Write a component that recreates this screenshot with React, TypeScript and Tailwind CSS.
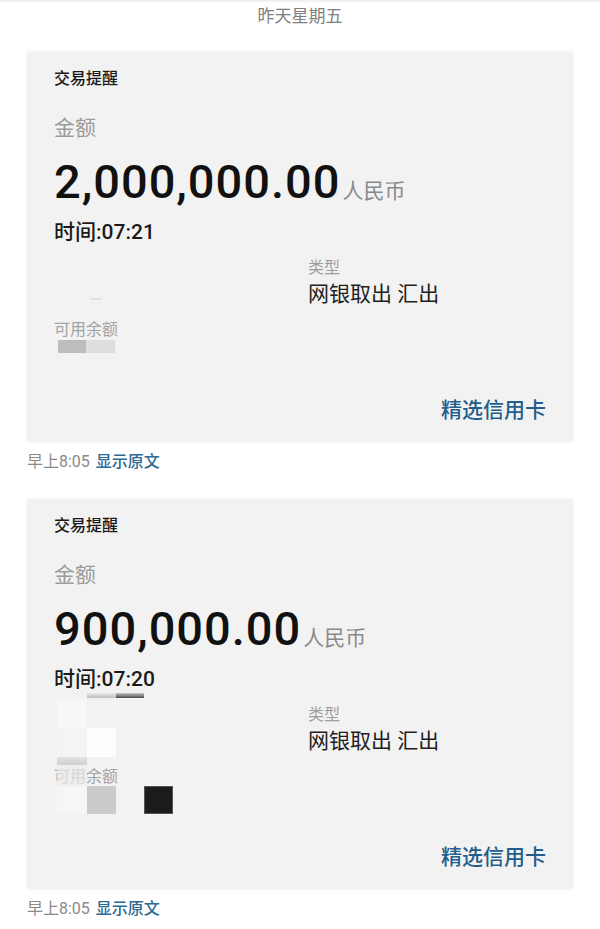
import React from 'react';

const font = "font-['Roboto','Noto_Sans_CJK_SC',sans-serif]";

type Txn = {
  amount: string;
  time: string;
  censor: 'light' | 'heavy';
};

const txns: Txn[] = [
  { amount: '2,000,000.00', time: '07:21', censor: 'light' },
  { amount: '900,000.00', time: '07:20', censor: 'heavy' },
];

// redaction mosaic that sits on top of the second card
function Mosaic() {
  return (
    <div className="pointer-events-none absolute left-[30px] top-[194px] grid grid-cols-[30px_29px_28px_29px] grid-rows-[5px_1px_29px_29px_8px_21px_28px]">
      <div className="col-start-2 row-start-1 bg-gradient-to-b from-[#e8e8e8] to-[#bdbdbd]" />
      <div className="col-start-3 row-start-1 bg-gradient-to-b from-[#c8c8c8] to-[#4a4a4a]" />
      <div className="col-start-1 row-start-3 bg-[#f7f7f7]" />
      <div className="col-start-1 row-start-4 bg-[#f4f4f4]" />
      <div className="col-start-2 row-start-4 bg-[#fdfdfd]" />
      <div className="col-start-1 row-start-5 bg-gradient-to-b from-[#e2e2e2] to-[#cfcfcf]" />
      <div className="col-start-1 row-start-6 bg-[#ececec]/70" />
      <div className="col-start-1 row-start-7 bg-[#f6f6f6]" />
      <div className="col-start-2 row-start-7 bg-[#cbcbcb]" />
      <div className="col-start-4 row-start-7 border border-[#555] bg-[#1c1c1c]" />
    </div>
  );
}

function TxnCard({ t }: { t: Txn }) {
  return (
    <div className="relative rounded-[3px] bg-[#f2f2f2] px-[27px] pb-[18px] pt-[17px] shadow-[0_0_4px_rgba(0,0,0,0.06)]">
      <div className="h-[20px] text-[16px] font-medium leading-[20px] text-[#1a1a1a]">交易提醒</div>
      <div className="mt-[25px] h-[28px] text-[21px] leading-[28px] text-[#9b9b9b]">金额</div>
      <div className="mt-[13px] flex h-[54px] items-baseline">
        <span className="text-[47px] font-medium leading-[54px] tracking-[1px] text-[#111]">{t.amount}</span>
        <span className="ml-[2px] text-[21px] leading-[54px] text-[#8a8a8a]">人民币</span>
      </div>
      <div className="mt-[9px] h-[28px] text-[21px] font-medium leading-[28px] text-[#1a1a1a]">时间:{t.time}</div>
      <div className="mt-[12px] grid grid-cols-2">
        <div className="flex items-end pb-[8px]">
          {t.censor === 'light' && <div className="ml-[36px] h-[2px] w-[12px] bg-[#e4e4e4]" />}
        </div>
        <div className="pl-[8px]">
          <div className="h-[20px] text-[16px] leading-[20px] text-[#9d9d9d]">类型</div>
          <div className="mt-[2px] h-[28px] text-[21px] leading-[28px] text-[#1e1e1e]">网银取出 汇出</div>
        </div>
      </div>
      <div className="mt-[12px] h-[20px] text-[16px] leading-[20px] text-[#a3a3a3]">可用余额</div>
      <div className="ml-[4px] flex h-[13px]">
        {t.censor === 'light' && (
          <>
            <div className="w-[28px] bg-[#bdbdbd]" />
            <div className="w-[29px] bg-[#dedede]" />
          </>
        )}
      </div>
      <div className="mt-[43px] flex h-[28px] justify-end">
        <span className="text-[21px] font-medium leading-[28px] text-[#225d8b]">精选信用卡</span>
      </div>
      {t.censor === 'heavy' && <Mosaic />}
    </div>
  );
}

export default function App() {
  return (
    <div className={`${font} min-h-[929px] w-[600px] bg-white`}>
      <div className="h-[3px] bg-gradient-to-b from-[#ececec] to-white" />
      <div className="pt-[3px] text-center text-[17px] leading-[20px] text-[#808080]">昨天星期五</div>
      <div className="mt-[26px] flex flex-col gap-[27px] px-[27px]">
        {txns.map((t, i) => (
          <div key={i}>
            <TxnCard t={t} />
            <div className="mt-[10px] flex h-[20px] items-center gap-[6px] text-[16px] leading-[20px]">
              <span className="text-[#8a8a8a]">早上8:05</span>
              <span className="font-medium text-[#2b6a93]">显示原文</span>
            </div>
          </div>
        ))}
      </div>
    </div>
  );
}
